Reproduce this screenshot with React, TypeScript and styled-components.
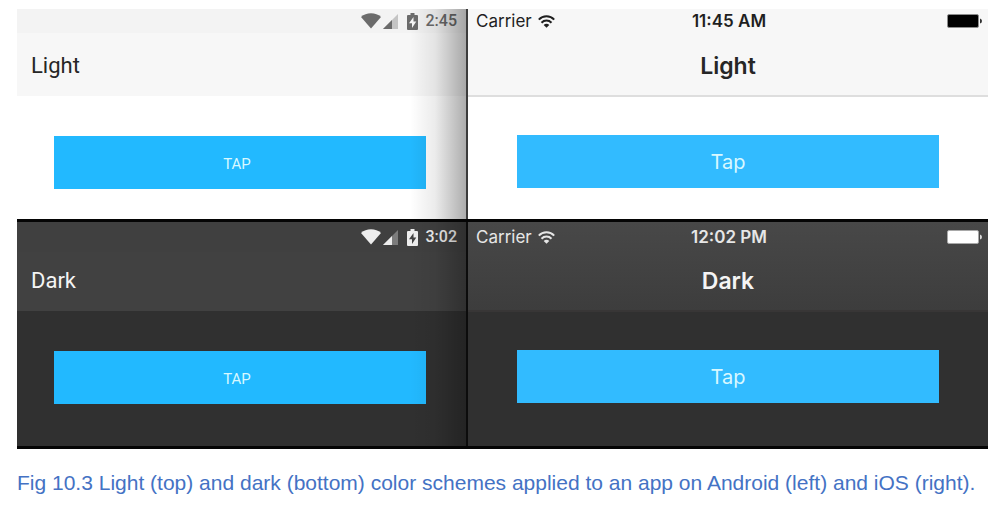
import React from "react";
import styled, { createGlobalStyle } from "styled-components";

type Scheme = "light" | "dark";
type Platform = "android" | "ios";

const themes = {
  light: {
    status: { android: "#f3f3f3", ios: "#f7f7f7" },
    bar: "#f7f7f7",
    barEnd: "#f7f7f7",
    page: "#ffffff",
    edge: "#dedede",
    title: "#262626",
    clock: { android: "#6b6b6b", ios: "#1f1f1f" },
    faded: "#c4c4c4",
    battery: "#000000",
    shadowMid: "rgba(0, 0, 0, 0.08)",
    shadow: "rgba(0, 0, 0, 0.32)",
  },
  dark: {
    status: { android: "#404040", ios: "#484848" },
    bar: "#414141",
    barEnd: "#3d3d3d",
    page: "#303030",
    edge: "#383636",
    title: "#f4f4f4",
    clock: { android: "#ededed", ios: "#e6e6e6" },
    faded: "#7c7c7c",
    battery: "#ffffff",
    shadowMid: "rgba(0, 0, 0, 0.05)",
    shadow: "rgba(0, 0, 0, 0.26)",
  },
};

const GlobalStyle = createGlobalStyle`
  *, *::before, *::after { box-sizing: border-box; }
  body { margin: 0; background: #ffffff; }
`;

const Figure = styled.figure`
  margin: 0;
  padding: 9px 17px;
`;

const Screens = styled.div`
  display: flex;
  flex-direction: column;
`;

const SchemeRow = styled.div<{ $scheme: Scheme }>`
  display: grid;
  grid-template-columns: 449fr 522fr;
  min-height: ${(p) => (p.$scheme === "light" ? 213 : 227)}px;
  border-bottom: 3px solid #050505;
`;

const Screen = styled.section<{ $scheme: Scheme; $platform: Platform }>`
  position: relative;
  display: flex;
  flex-direction: column;
  min-width: 0;
  background: ${(p) => themes[p.$scheme].page};
  font-family: ${(p) => (p.$platform === "android" ? "Roboto" : "Inter")}, sans-serif;
  ${(p) =>
    p.$platform === "ios"
      ? `border-left: 2px solid ${p.$scheme === "light" ? "#3c3c3c" : "#0c0c0c"};`
      : `&::after {
          content: "";
          position: absolute;
          inset: 0 0 0 auto;
          width: 56px;
          pointer-events: none;
          background: linear-gradient(to right, transparent, ${themes[p.$scheme].shadowMid} 45%, ${themes[p.$scheme].shadow});
        }`}
`;

const Header = styled.header<{ $scheme: Scheme; $platform: Platform }>`
  display: flex;
  flex-direction: column;
  height: ${(p) => (p.$scheme === "light" ? 88 : 90)}px;
  color: ${(p) => themes[p.$scheme].title};
  background: ${(p) =>
    p.$platform === "ios"
      ? `linear-gradient(${themes[p.$scheme].status.ios}, ${themes[p.$scheme].barEnd})`
      : themes[p.$scheme].bar};
  border-bottom: ${(p) =>
    p.$platform === "ios" ? `2px solid ${themes[p.$scheme].edge}` : `1px solid ${themes[p.$scheme].page}`};
`;

const AndroidStatus = styled.div<{ $scheme: Scheme }>`
  display: flex;
  align-items: center;
  justify-content: flex-end;
  height: ${(p) => (p.$scheme === "light" ? 24 : 30)}px;
  padding-right: 9px;
  font-size: 16px;
  font-weight: 500;
  line-height: 24px;
  color: ${(p) => themes[p.$scheme].clock.android};
  background: ${(p) => themes[p.$scheme].status.android};

  svg + svg { margin-left: 2px; }
  svg:nth-of-type(3) { margin: 0 8px 0 9px; }
`;

const IosStatus = styled.div<{ $scheme: Scheme }>`
  display: grid;
  grid-template-columns: 1fr auto 1fr;
  align-items: center;
  height: ${(p) => (p.$scheme === "light" ? 24 : 30)}px;
  padding: 0 6px 0 8px;
  font-size: 17px;
  font-weight: 600;
  line-height: 24px;
  color: ${(p) => themes[p.$scheme].clock.ios};

  > svg { justify-self: end; }
`;

const Carrier = styled.span`
  display: flex;
  align-items: center;
  gap: 6px;
  font-weight: 400;
`;

const Title = styled.h2<{ $platform: Platform; $scheme: Scheme }>`
  margin: 0;
  padding: ${(p) => (p.$scheme === "light" ? "19px" : "15px")} 14px 0;
  font-size: ${(p) => (p.$platform === "android" ? 22 : 23)}px;
  line-height: 28px;
  font-weight: ${(p) => (p.$platform === "android" ? 400 : 600)};
  text-align: ${(p) => (p.$platform === "android" ? "left" : "center")};
`;

const Content = styled.div<{ $platform: Platform }>`
  display: flex;
  padding: ${(p) => (p.$platform === "android" ? "39px 40px 0 37px" : "38px 49px 0")};
`;

const TapButton = styled.button<{ $platform: Platform }>`
  flex: 1;
  height: 53px;
  padding: ${(p) => (p.$platform === "android" ? "2px 6px 0 0" : "0")};
  border: 0;
  color: #d8f8ff;
  font-family: inherit;
  font-weight: 400;
  font-size: ${(p) => (p.$platform === "android" ? 15 : 20)}px;
  background: ${(p) => (p.$platform === "android" ? "#22b9ff" : "#32bbff")};
`;

const Caption = styled.figcaption`
  padding-top: 22px;
  font-family: "Liberation Sans", sans-serif;
  font-size: 21px;
  line-height: 24px;
  color: #4472c4;
`;

function AndroidIcons({ scheme }: { scheme: Scheme }) {
  const { faded, bar } = themes[scheme];
  return (
    <>
      <svg width="20" height="16" viewBox="0 0 20 16" aria-hidden="true">
        <path d="M0 4C2.7 1.6 6.1.3 10 .3S17.300 1.600 20 4L10 15.600Z" fill="currentColor" />
      </svg>
      <svg width="15" height="15" viewBox="0 0 15 15" aria-hidden="true">
        <path d="M15 0V15H0Z" fill={faded} />
        <path d="M9 6V15H0Z" fill="currentColor" />
      </svg>
      <svg width="11" height="17" viewBox="0 0 11 17" aria-hidden="true">
        <path d="M3.500 0h4v2H10q1 0 1 1v13q0 1-1 1H1q-1 0-1-1V3q0-1 1-1h2.500Z" fill="currentColor" />
        <path d="M6.500 4 2 10.300h3V15l4.300-6.500H6.500Z" fill={bar} />
      </svg>
    </>
  );
}

function WifiIcon() {
  return (
    <svg width="17" height="13" viewBox="0 0 17 13" aria-hidden="true">
      <g fill="none" stroke="currentColor" strokeWidth="2">
        <path d="M.800 4.600C5 .200 12 .200 16.200 4.600" />
        <path d="M3.500 7.700c2.800-2.900 7.200-2.900 10 0" />
      </g>
      <path d="M5.700 9.900c1.600-1.600 4-1.600 5.600 0L8.500 12.700Z" fill="currentColor" />
    </svg>
  );
}

function BatteryIcon({ scheme }: { scheme: Scheme }) {
  const fill = themes[scheme].battery;
  return (
    <svg width="35" height="14" viewBox="0 0 35 14" aria-hidden="true">
      <rect x=".5" y=".5" width="31" height="13" rx="1.500" fill={fill} stroke={scheme === "light" ? "#8c8c8c" : "#a8a8a8"} />
      <path d="M33 4.500q2 .5 2 2.500t-2 2.500Z" fill={fill} opacity=".8" />
    </svg>
  );
}

function AndroidScreen({ scheme, title, time }: { scheme: Scheme; title: string; time: string }) {
  return (
    <Screen $scheme={scheme} $platform="android">
      <Header $scheme={scheme} $platform="android">
        <AndroidStatus $scheme={scheme}>
          <AndroidIcons scheme={scheme} />
          <span>{time}</span>
        </AndroidStatus>
        <Title $scheme={scheme} $platform="android">{title}</Title>
      </Header>
      <Content $platform="android">
        <TapButton type="button" $platform="android">TAP</TapButton>
      </Content>
    </Screen>
  );
}

function IosScreen({ scheme, title, time }: { scheme: Scheme; title: string; time: string }) {
  return (
    <Screen $scheme={scheme} $platform="ios">
      <Header $scheme={scheme} $platform="ios">
        <IosStatus $scheme={scheme}>
          <Carrier>Carrier <WifiIcon /></Carrier>
          <span>{time}</span>
          <BatteryIcon scheme={scheme} />
        </IosStatus>
        <Title $scheme={scheme} $platform="ios">{title}</Title>
      </Header>
      <Content $platform="ios">
        <TapButton type="button" $platform="ios">Tap</TapButton>
      </Content>
    </Screen>
  );
}

export default function App() {
  return (
    <>
      <GlobalStyle />
      <Figure>
        <Screens>
          <SchemeRow $scheme="light">
            <AndroidScreen scheme="light" title="Light" time="2:45" />
            <IosScreen scheme="light" title="Light" time="11:45 AM" />
          </SchemeRow>
          <SchemeRow $scheme="dark">
            <AndroidScreen scheme="dark" title="Dark" time="3:02" />
            <IosScreen scheme="dark" title="Dark" time="12:02 PM" />
          </SchemeRow>
        </Screens>
        <Caption>
          Fig 10.3 Light (top) and dark (bottom) color schemes applied to an app on Android (left) and iOS (right).
        </Caption>
      </Figure>
    </>
  );
}
